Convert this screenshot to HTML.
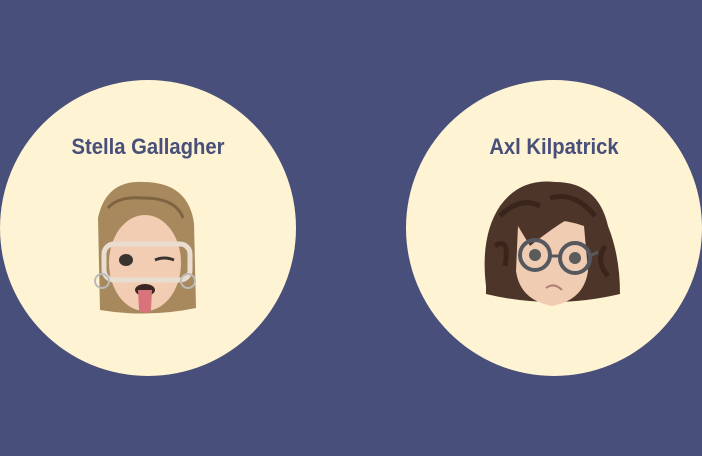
<!DOCTYPE html>
<html><head><meta charset="utf-8"><style>
html,body{margin:0;padding:0;width:702px;height:456px;background:#474f7a;overflow:hidden}
.c{position:absolute;width:296px;height:296px;border-radius:50%;background:#fef3d2;top:80px}
.n{position:absolute;top:134px;width:296px;text-align:center;font:bold 22px "Liberation Sans",sans-serif;color:#474f7a;transform:scaleX(0.92);}
svg{position:absolute}
</style></head><body>
<div class="c" style="left:0"></div>
<div class="c" style="left:406px"></div>
<div class="n" style="left:0">Stella Gallagher</div>
<div class="n" style="left:406px">Axl Kilpatrick</div>

<svg style="left:88px;top:178px" width="115" height="140" viewBox="0 0 115 140">
<path d="M10 40 Q18 2 55 4 Q100 4 106 45 L108 130 Q60 140 12 132 Z" fill="#a8895e"/>
<path d="M20 30 Q30 18 55 20 Q88 20 95 40" stroke="#7e6440" stroke-width="3" fill="none"/>
<ellipse cx="57" cy="85" rx="36" ry="48" fill="#f2cdb4"/>
<rect x="16" y="66" width="86" height="36" rx="10" fill="none" stroke="#e9ddd0" stroke-width="5"/>
<ellipse cx="38" cy="82" rx="7" ry="6" fill="#3a3430"/>
<path d="M67 82 Q76 78 86 82" stroke="#3a3430" stroke-width="3" fill="none"/>
<ellipse cx="57" cy="112" rx="10" ry="6" fill="#3a2624"/>
<path d="M50 112 L64 112 L63 132 Q57 138 51 132 Z" fill="#d9737a"/>
<circle cx="14" cy="103" r="7" fill="none" stroke="#bbb" stroke-width="2"/>
<circle cx="100" cy="103" r="7" fill="none" stroke="#bbb" stroke-width="2"/>
</svg>

<svg style="left:480px;top:176px" width="145" height="134" viewBox="0 0 145 134">
<path d="M6 110 Q0 60 20 30 Q40 2 75 6 Q118 6 128 50 Q140 80 140 118 Q72 134 6 118 Z" fill="#4e3529"/>
<path d="M20 40 Q40 20 60 30 M70 22 Q95 15 115 40 M15 70 Q30 60 25 90 M125 70 Q115 85 128 100" stroke="#3a251c" stroke-width="5" fill="none"/>
<path d="M38 50 Q70 38 104 50 L108 95 Q104 124 72 130 Q40 124 36 95 Z" fill="#f0ccb2"/>
<path d="M38 50 Q55 30 90 42 Q75 50 50 70 Z" fill="#4e3529"/>
<circle cx="55" cy="79" r="15" fill="none" stroke="#55585e" stroke-width="4"/>
<circle cx="95" cy="82" r="15" fill="none" stroke="#55585e" stroke-width="4"/>
<path d="M70 80 L80 80 M110 80 L118 76" stroke="#55585e" stroke-width="3"/>
<circle cx="55" cy="79" r="6" fill="#5b5b5b"/>
<circle cx="95" cy="82" r="6" fill="#5b5b5b"/>
<path d="M66 112 Q74 106 82 114" stroke="#b07e74" stroke-width="2" fill="none"/>
</svg>
</body></html>
